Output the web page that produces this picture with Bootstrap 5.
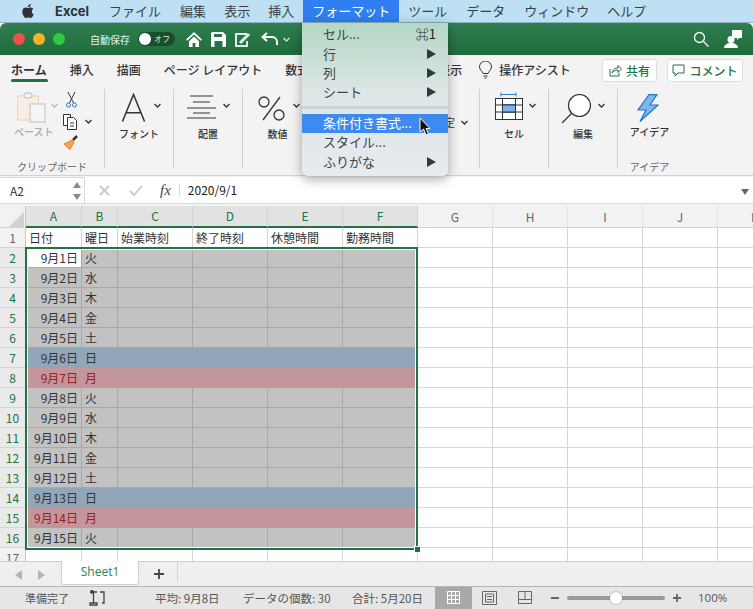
<!DOCTYPE html>
<html lang="ja"><head><meta charset="utf-8"><title>Excel</title>
<link rel="stylesheet" href="https://cdn.jsdelivr.net/npm/bootstrap@5.3.0/dist/css/bootstrap.min.css">
<style>
html,body{margin:0;height:609px;overflow:hidden;background:#fff}
body{font-family:"Noto Sans CJK JP","Liberation Sans",sans-serif;font-size:12px;color:#333;width:753px;position:relative}
.xl-menubar{height:23px;background:#bde0f3;border-bottom:1px solid #8fb0c4;font-size:13px;color:#3a3f44;padding-left:21px;line-height:22px}
.xl-menubar span{padding:0 9px;height:22px;white-space:nowrap}
.xl-menubar .xl-brand{font-family:"Inter","Liberation Sans",sans-serif;font-weight:700;color:#2d3338;padding:0 20px 0 20px;font-size:13px}
.xl-menubar .xl-active{background:#2f7ff0;color:#fff;margin-left:0}
.xl-title{height:32px;background:linear-gradient(#2f7f50,#1f6b3b);border-radius:6px 6px 0 0;color:#fff;padding:0 11px 0 13px}
.xl-dot{width:12px;height:12px;border-radius:50%;margin-right:8px;flex:none}
.xl-toggle{width:37px;height:14px;border-radius:7px;background:#174f2c;font-size:8px;position:relative;padding-left:16px;line-height:14px;margin-left:8px;color:#d9e7de}
.xl-toggle::before{content:"";position:absolute;left:1px;top:1px;width:12px;height:12px;border-radius:50%;background:#fff}
.xl-ribbon{height:121px;background:#f3f3f3;border-bottom:1px solid #d2d2d2}
.xl-tabs{height:34px;padding:0 0 4px 11px;gap:23px;font-size:12px;color:#333;font-weight:500;white-space:nowrap;position:relative}
.xl-tabon{font-weight:700;position:relative}
.xl-tabon::after{content:"";position:absolute;left:0;right:-1px;top:18px;height:3px;background:#217346;border-radius:2px}
.xl-rbtn{position:absolute;top:4px;height:23px;background:#fff;border:1px solid #dedede;border-radius:3px;color:#217346;font-weight:500;font-size:12px;gap:4px}
.xl-grp{height:79px;border-right:1px solid #cfcfcf;flex:none;position:relative}
.xl-big{height:34px;margin-top:4px}
.xl-lbl{font-size:10px;line-height:14px;text-align:center;color:#333;font-weight:500}
.xl-foot{position:absolute;left:0;right:0;bottom:-5px;font-size:10px;line-height:12px;text-align:center;color:#666}
.xl-fx{height:30px;background:#f3f3f3;padding:1px 0 2px}
.xl-name{width:85px;background:#fff;border:1px solid #d8d8d8;border-left:0;padding-left:10px;position:relative}
.xl-ftext{background:#fff;border:1px solid #dcdcdc;border-width:0 0 1px;flex:1;padding-left:8px;position:relative;color:#222}
.xl-sheet{height:355px;overflow:hidden;position:relative;background:#fff}
.xl-grid{border-collapse:separate;border-spacing:0;table-layout:fixed;width:793px;font-size:12px;color:#333}
.xl-grid td,.xl-grid th{box-sizing:border-box;height:20px;padding:0 3px;border-right:1px solid #d4d4d4;border-bottom:1px solid #d4d4d4;font-weight:400;white-space:nowrap;overflow:hidden;line-height:18px;background-clip:padding-box}
.xl-grid thead th{height:22px;background:#f2f2f2;color:#666;text-align:center;border-right-color:#e2e2e2;border-bottom-color:#d4d4d4;padding:0}
.xl-grid thead th.xl-on{background:#e2e2e2;color:#217346;border-bottom:2px solid #217346;border-right-color:#d2d2d2}
.xl-grid th.xl-rn{background:#f2f2f2;color:#666;text-align:center;padding:0;border-right-color:#c8c8c8}
.xl-grid th.xl-rn.xl-on{color:#217346;background:#eaeaea}
.xl-grid td.xl-g{background:#c2c2c2;border-color:#a8a8a8}
.xl-grid td.xl-b{background:#92a6b9;border-color:#92a6b9}
.xl-grid td.xl-r{background:#c2969b;border-color:#c2969b;color:#9b1c23}
.xl-grid td.xl-d{text-align:right;padding-right:3px}
.xl-grid td.xl-w{background:#fff;border-color:#a8a8a8}
.xl-sel{position:absolute;left:25px;top:41px;width:393px;height:303px;border:2px solid #217346;box-shadow:inset 0 0 0 1px #fff;pointer-events:none}
.xl-handle{position:absolute;left:387px;bottom:-5px;width:7px;height:7px;background:#217346;border:1px solid #fff}
.xl-corner{width:0;height:0;border-style:solid;border-width:0 0 15px 15px;border-color:transparent transparent #d0d0d0 transparent;margin:5px 0 0 9px}
.xl-tabbar{height:25px;background:#efefef;border-top:1px solid #cfcfcf;position:relative}
.xl-sheettab{position:absolute;left:61px;top:-1px;width:78px;height:24px;background:#fff;border:1px solid #d0d0d0;border-top:0;border-radius:0 0 3px 3px;color:#2f8457;text-align:center;line-height:22px;font-family:"Open Sans","Liberation Sans",sans-serif;font-size:12px}
.xl-status{height:23px;background:#e6e6e6;border-top:1px solid #b5b5b5;font-size:11.5px;color:#555;position:relative;white-space:nowrap}
.xl-status>span{position:absolute;top:0;line-height:22px}
.xl-view{position:absolute;left:435px;top:0;width:37px;height:22px;background:#a9a9a9}
.xl-track{position:absolute;left:567px;top:9px;width:98px;height:4px;border-radius:2px;background:#9a9a9a}
.xl-thumb{position:absolute;left:610px;top:5px;width:12px;height:12px;border-radius:50%;background:#fff;box-shadow:0 0 2px #888}
.xl-popup{position:absolute;left:302px;top:23px;width:146px;height:153px;background:linear-gradient(#b3d7c4,#dde6e6 45%,#e6ebee);border-radius:0 0 6px 6px;box-shadow:0 3px 12px rgba(0,0,0,.35);font-size:13px;color:#3f4448;padding-top:2px;z-index:5}
.xl-it{height:19px;line-height:17px;padding:0 12px 0 21px;white-space:nowrap}
.xl-it.xl-hi{background:#3f8af0;color:#fff}
.xl-sep{height:3px;background:#cdd6d5;margin:5px 0 5px}
.xl-tri{width:0;height:0;border-style:solid;border-width:5px 0 5px 9px;border-color:transparent transparent transparent #33393d}
.xl-key{color:#222}
svg{display:block;flex:none}
</style></head><body>

<div class="xl-menubar d-flex">
<svg width="14" height="16" viewBox="0 0 24 24" fill="#2d3338" class="align-self-center"><path d="M12.152 6.896c-.948 0-2.415-1.078-3.96-1.04-2.04.027-3.91 1.183-4.961 3.014-2.117 3.675-.546 9.103 1.519 12.09 1.013 1.454 2.208 3.09 3.792 3.039 1.52-.065 2.09-.987 3.935-.987 1.831 0 2.35.987 3.96.948 1.637-.026 2.676-1.48 3.676-2.948 1.156-1.688 1.636-3.325 1.662-3.415-.039-.013-3.182-1.221-3.22-4.857-.026-3.04 2.48-4.494 2.597-4.559-1.429-2.09-3.623-2.324-4.39-2.376-2-.156-3.675 1.09-4.61 1.09zM15.53 3.83c.843-1.012 1.4-2.427 1.245-3.83-1.207.052-2.662.805-3.532 1.818-.78.896-1.454 2.338-1.273 3.714 1.338.104 2.715-.688 3.559-1.701"/></svg>
<span class="xl-brand">Excel</span><span style="padding-left:0;padding-right:19px">ファイル</span><span style="padding-left:0;padding-right:18px">編集</span><span style="padding-left:0;padding-right:18px">表示</span><span style="padding-left:0;padding-right:9px">挿入</span><span class="xl-active">フォーマット</span><span>ツール</span><span style="padding-left:10px">データ</span><span style="padding-left:10px">ウィンドウ</span><span style="padding-left:9px">ヘルプ</span>
</div>

<div class="xl-title d-flex align-items-center">
<div class="xl-dot" style="background:#f0504a"></div><div class="xl-dot" style="background:#f6b32a"></div><div class="xl-dot" style="background:#2ecb40"></div>
<div style="margin-left:17px;font-size:10px;font-weight:500;color:#cfe3d6;white-space:nowrap">自動保存</div>
<div class="xl-toggle">オフ</div>
<svg style="margin-left:11px" width="16" height="15" viewBox="0 0 16 15" fill="#fff"><path d="M8 0 0 7.5l1.3 1.2L8 2.6l6.7 6.1L16 7.5zM3 9.2V15h3.6v-4h2.8v4H13V9.2L8 4.6z"/></svg>
<svg style="margin-left:9px" width="15" height="15" viewBox="0 0 15 15" fill="#fff"><path d="M0 1.5A1.500 1.500 0 0 1 1.500 0H12l3 3v10.500a1.500 1.500 0 0 1-1.500 1.500h-12A1.500 1.500 0 0 1 0 13.500zM3 2v3h8V2zM3.500 9v6h8V9z"/></svg>
<svg style="margin-left:8px" width="18" height="15" viewBox="0 0 18 15" fill="none" stroke="#dfeee4" stroke-width="2"><path d="M13 2H2v12h11V9"/><path d="M6 11 15 2" stroke-width="3"/></svg>
<svg style="margin-left:9px" width="18" height="14" viewBox="0 0 18 14" fill="none" stroke="#fff" stroke-width="2"><path d="M6 1 1.500 5 6 9M2 5h9a5 5 0 0 1 5 5v3"/></svg>
<svg style="margin-left:4px" width="7" height="5" viewBox="0 0 7 5" fill="none" stroke="#cfe3d6" stroke-width="1.300"><path d="M.500 1 3.500 4l3-3"/></svg>
<div class="ms-auto d-flex align-items-center">
<svg width="16" height="16" viewBox="0 0 16 16" fill="none" stroke="#fff" stroke-width="1.300"><circle cx="6.500" cy="6.500" r="5"/><path d="m10.500 10.500 5 5"/></svg>
<svg style="margin-left:15px" width="18" height="18" viewBox="0 0 18 18" fill="#fff"><path d="M8 0h10v8h-3l-2 2V8H8z"/><circle cx="7" cy="9.500" r="3.500"/><path d="M0 18c0-3 3-5 7-5s7 2 7 5z"/></svg>
</div>
</div>

<div class="xl-ribbon">
<div class="xl-tabs d-flex align-items-center">
<span class="xl-tabon">ホーム</span><span>挿入</span><span>描画</span><span>ページ レイアウト</span><span>数式</span><span>データ</span><span>校閲</span><span>表示</span>
<svg style="margin-left:-7px" width="15" height="18" viewBox="0 0 15 18" fill="none" stroke="#333" stroke-width="1"><path d="M5 12.500C4.500 10 1.500 9 1.500 6a6 6 0 0 1 12 0c0 3-3 4-3.500 6.500zM5.500 15h4M6.500 17h2"/></svg>
<span style="margin-left:-17px">操作アシスト</span>
<div class="xl-rbtn d-flex align-items-center justify-content-center" style="left:602px;width:55px"><svg width="13" height="13" viewBox="0 0 13 13" fill="none" stroke="#217346" stroke-width="1"><path d="M1 5v7h9V9M3 9c1-4 3-5 6-5V1.500L12.500 5 9 8.500V6C6.500 6 4.500 7 3 9z"/></svg>共有</div>
<div class="xl-rbtn d-flex align-items-center justify-content-center" style="left:667px;width:76px"><svg width="13" height="13" viewBox="0 0 13 13" fill="none" stroke="#217346" stroke-width="1"><path d="M1 1h11v8H6l-3 3V9H1z"/></svg>コメント</div>
</div>
<div class="d-flex">
 <div class="xl-grp d-flex" style="width:105px">
  <div style="width:62px;padding-left:14px">
   <div class="d-flex" style="margin-top:3px;height:37px">
   <svg style="margin-left:3px" width="29" height="31" viewBox="0 0 29 31" fill="none"><rect x=".5" y="4" width="21" height="24" fill="#f6eee2" stroke="#ecd5b5"/><rect x="7" y="1" width="8" height="5" rx="2" fill="#f3f3f3" stroke="#bbb"/><rect x="13" y="12" width="15" height="18" fill="#f5f5f5" stroke="#c0c0c0"/></svg>
   <svg style="margin:11px 0 0 5px" width="7" height="5" viewBox="0 0 7 5" fill="none" stroke="#bbb" stroke-width="1.300"><path d="M.500 1 3.500 4l3-3"/></svg>
   </div>
   <div class="xl-lbl" style="color:#aaa;text-align:left;margin-top:-13px;padding-top:4px;white-space:nowrap;line-height:24px">ペースト</div>
  </div>
  <div>
   <svg style="margin:3px 0 0 4px" width="11" height="16" viewBox="0 0 11 16" fill="none" stroke="#333"><path d="M2 0l5.500 11M9 0 3.500 11"/><circle cx="2.500" cy="13" r="2" stroke="#2c7cc8"/><circle cx="8.500" cy="13" r="2" stroke="#2c7cc8"/></svg>
   <div class="d-flex" style="margin-top:6px"><svg style="margin-left:1px" width="16" height="16" viewBox="0 0 16 16" fill="#fff" stroke="#333"><path d="M.500.500h7v11h-7z"/><path d="M4.500 3.500h6l3 3v9h-9z"/><path d="M7 9h4M7 12h4"/></svg><svg style="margin:5px 0 0 6px" width="7" height="5" viewBox="0 0 7 5" fill="none" stroke="#333" stroke-width="1.300"><path d="M.500 1 3.500 4l3-3"/></svg></div>
   <svg style="margin:5px 0 0 1px" width="15" height="15" viewBox="0 0 15 15"><path d="M9 5 1 9l6 5.500L11 7z" fill="#f5a35a" stroke="#e57c25"/><path d="m10 5 4-4" stroke="#333" stroke-width="2.500"/></svg>
  </div>
  <div class="xl-foot">クリップボード</div>
 </div>
 <div class="xl-grp" style="width:69px">
  <div class="xl-big d-flex justify-content-center">
  <svg style="margin-left:4px" width="25" height="30" viewBox="0 0 26 30" fill="none" stroke="#333" stroke-width="1.600"><path d="M1.500 29 13 1l11.500 28M5.500 20h15"/></svg>
  <svg style="margin:10px 0 0 8px" width="7" height="5" viewBox="0 0 7 5" fill="none" stroke="#333" stroke-width="1.300"><path d="M.500 1 3.500 4l3-3"/></svg>
  </div>
  <div class="xl-lbl">フォント</div>
 </div>
 <div class="xl-grp" style="width:69px">
  <div class="xl-big d-flex justify-content-center">
  <svg style="margin:2px 0 0 1px" width="29" height="24" viewBox="0 0 29 24" fill="none" stroke="#333"><path d="M3 1h23M6 7h17M0 13h29M6 18h17M0 23h29"/></svg>
  <svg style="margin:10px 0 0 7px" width="7" height="5" viewBox="0 0 7 5" fill="none" stroke="#333" stroke-width="1.300"><path d="M.500 1 3.500 4l3-3"/></svg>
  </div>
  <div class="xl-lbl">配置</div>
 </div>
 <div class="xl-grp d-flex" style="width:237px">
  <div style="width:69px">
   <div class="xl-big d-flex justify-content-center">
   <svg style="margin:3px 0 0 3px" width="27" height="25" viewBox="0 0 27 25" fill="none" stroke="#333" stroke-width="1.300"><circle cx="6" cy="6" r="5"/><circle cx="21" cy="19" r="5"/><path d="M22 1 5 24"/></svg>
   <svg style="margin:10px 0 0 8px" width="7" height="5" viewBox="0 0 7 5" fill="none" stroke="#333" stroke-width="1.300"><path d="M.500 1 3.500 4l3-3"/></svg>
   </div>
   <div class="xl-lbl">数値</div>
  </div>
  <div class="ms-auto d-flex align-items-start" style="padding:25px 11px 0 0;font-size:11px;white-space:nowrap;gap:6px">書式設定<svg style="margin-top:6px" width="7" height="5" viewBox="0 0 7 5" fill="none" stroke="#333" stroke-width="1.300"><path d="M.500 1 3.500 4l3-3"/></svg></div>
 </div>
 <div class="xl-grp" style="width:69px">
  <div class="xl-big d-flex justify-content-center">
  <svg style="margin:-1px 0 0 3px" width="28" height="28" viewBox="0 0 28 28" fill="#fff" stroke="#333"><path d="M6 2.500h15" stroke="#2c7cc8" fill="none"/><path d="M6 .5v4M21 .5v4" stroke="#2c7cc8" fill="none"/><rect x=".5" y="6.500" width="27" height="21"/><rect x="7.500" y="12.500" width="13" height="8" fill="#7fb3e6" stroke="#2c7cc8"/><path d="M.5 13h27M.5 20h27M7.500 6.500v21M20.500 6.500v21" fill="none"/></svg>
  <svg style="margin:10px 0 0 6px" width="7" height="5" viewBox="0 0 7 5" fill="none" stroke="#333" stroke-width="1.300"><path d="M.500 1 3.500 4l3-3"/></svg>
  </div>
  <div class="xl-lbl">セル</div>
 </div>
 <div class="xl-grp" style="width:69px">
  <div class="xl-big d-flex justify-content-center">
  <svg style="margin:1px 0 0 0" width="30" height="30" viewBox="0 0 30 30" fill="none" stroke="#333" stroke-width="1.200"><circle cx="18.500" cy="11.500" r="11" fill="#fff"/><path d="M10.500 19.500 1 29"/></svg>
  <svg style="margin:10px 0 0 7px" width="7" height="5" viewBox="0 0 7 5" fill="none" stroke="#333" stroke-width="1.300"><path d="M.500 1 3.500 4l3-3"/></svg>
  </div>
  <div class="xl-lbl">編集</div>
 </div>
 <div class="xl-grp border-0" style="width:63px">
  <div class="xl-big d-flex justify-content-center">
  <svg style="margin:1px 4px 0 0" width="22" height="28" viewBox="0 0 22 28"><path d="M12 .7 1 16h8L3 27.500 21 11h-8l7-10.300z" fill="#7fb8ee" stroke="#1f78c8" stroke-width="1.200"/></svg>
  </div>
  <div class="xl-lbl" style="margin-top:-2px">アイデア</div>
  <div class="xl-foot">アイデア</div>
 </div>
</div>
</div>

<div class="xl-fx d-flex">
 <div class="xl-name d-flex align-items-center" style="font-size:12px">A2
  <svg class="position-absolute" style="left:73px;top:4px" width="8" height="18" viewBox="0 0 8 18" fill="#888"><path d="M4 0l4 6H0zM4 18l4-6H0z"/></svg></div>
 <div class="xl-ftext d-flex align-items-center" style="padding-left:0">
  <svg style="margin-left:14px" width="11" height="11" viewBox="0 0 11 11" stroke="#c8c8c8" stroke-width="1.800"><path d="m1 1 9 9M10 1l-9 9"/></svg>
  <svg style="margin-left:19px" width="14" height="11" viewBox="0 0 14 11" fill="none" stroke="#c8c8c8" stroke-width="1.800"><path d="m1 6 4 4 8-9"/></svg>
  <span style="margin-left:17px;font-family:'Liberation Serif',serif;font-style:italic;font-size:15px;color:#444">fx</span>
  <div style="width:1px;height:14px;background:#ddd;margin:0 8px 0 8px"></div>
  <span style="font-size:12px">2020/9/1</span>
  <svg class="position-absolute" style="right:4px;top:12px" width="8" height="6" viewBox="0 0 8 6" fill="#666"><path d="M0 0h8L4 6z"/></svg>
 </div>
</div>

<div class="xl-sheet">
<table class="xl-grid">
<colgroup><col style="width:26px"><col style="width:56px"><col style="width:36px"><col style="width:75px"><col style="width:75px"><col style="width:75px"><col style="width:75px"><col style="width:75px"><col style="width:75px"><col style="width:75px"><col style="width:75px"><col style="width:75px"></colgroup>
<thead><tr><th class="xl-rn"><div class="xl-corner"></div></th><th class="xl-on">A</th><th class="xl-on">B</th><th class="xl-on">C</th><th class="xl-on">D</th><th class="xl-on">E</th><th class="xl-on">F</th><th>G</th><th>H</th><th>I</th><th>J</th><th>K</th></tr></thead>
<tbody>
<tr><th class="xl-rn">1</th><td>日付</td><td>曜日</td><td>始業時刻</td><td>終了時刻</td><td>休憩時間</td><td>勤務時間</td><td></td><td></td><td></td><td></td><td></td></tr>
<tr><th class="xl-rn xl-on">2</th><td class="xl-w xl-d">9月1日</td><td class="xl-g">火</td><td class="xl-g"></td><td class="xl-g"></td><td class="xl-g"></td><td class="xl-g"></td><td></td><td></td><td></td><td></td><td></td></tr>
<tr><th class="xl-rn xl-on">3</th><td class="xl-g xl-d">9月2日</td><td class="xl-g">水</td><td class="xl-g"></td><td class="xl-g"></td><td class="xl-g"></td><td class="xl-g"></td><td></td><td></td><td></td><td></td><td></td></tr>
<tr><th class="xl-rn xl-on">4</th><td class="xl-g xl-d">9月3日</td><td class="xl-g">木</td><td class="xl-g"></td><td class="xl-g"></td><td class="xl-g"></td><td class="xl-g"></td><td></td><td></td><td></td><td></td><td></td></tr>
<tr><th class="xl-rn xl-on">5</th><td class="xl-g xl-d">9月4日</td><td class="xl-g">金</td><td class="xl-g"></td><td class="xl-g"></td><td class="xl-g"></td><td class="xl-g"></td><td></td><td></td><td></td><td></td><td></td></tr>
<tr><th class="xl-rn xl-on">6</th><td class="xl-g xl-d">9月5日</td><td class="xl-g">土</td><td class="xl-g"></td><td class="xl-g"></td><td class="xl-g"></td><td class="xl-g"></td><td></td><td></td><td></td><td></td><td></td></tr>
<tr><th class="xl-rn xl-on">7</th><td class="xl-b xl-d">9月6日</td><td class="xl-b">日</td><td class="xl-b"></td><td class="xl-b"></td><td class="xl-b"></td><td class="xl-b"></td><td></td><td></td><td></td><td></td><td></td></tr>
<tr><th class="xl-rn xl-on">8</th><td class="xl-r xl-d">9月7日</td><td class="xl-r">月</td><td class="xl-r"></td><td class="xl-r"></td><td class="xl-r"></td><td class="xl-r"></td><td></td><td></td><td></td><td></td><td></td></tr>
<tr><th class="xl-rn xl-on">9</th><td class="xl-g xl-d">9月8日</td><td class="xl-g">火</td><td class="xl-g"></td><td class="xl-g"></td><td class="xl-g"></td><td class="xl-g"></td><td></td><td></td><td></td><td></td><td></td></tr>
<tr><th class="xl-rn xl-on">10</th><td class="xl-g xl-d">9月9日</td><td class="xl-g">水</td><td class="xl-g"></td><td class="xl-g"></td><td class="xl-g"></td><td class="xl-g"></td><td></td><td></td><td></td><td></td><td></td></tr>
<tr><th class="xl-rn xl-on">11</th><td class="xl-g xl-d">9月10日</td><td class="xl-g">木</td><td class="xl-g"></td><td class="xl-g"></td><td class="xl-g"></td><td class="xl-g"></td><td></td><td></td><td></td><td></td><td></td></tr>
<tr><th class="xl-rn xl-on">12</th><td class="xl-g xl-d">9月11日</td><td class="xl-g">金</td><td class="xl-g"></td><td class="xl-g"></td><td class="xl-g"></td><td class="xl-g"></td><td></td><td></td><td></td><td></td><td></td></tr>
<tr><th class="xl-rn xl-on">13</th><td class="xl-g xl-d">9月12日</td><td class="xl-g">土</td><td class="xl-g"></td><td class="xl-g"></td><td class="xl-g"></td><td class="xl-g"></td><td></td><td></td><td></td><td></td><td></td></tr>
<tr><th class="xl-rn xl-on">14</th><td class="xl-b xl-d">9月13日</td><td class="xl-b">日</td><td class="xl-b"></td><td class="xl-b"></td><td class="xl-b"></td><td class="xl-b"></td><td></td><td></td><td></td><td></td><td></td></tr>
<tr><th class="xl-rn xl-on">15</th><td class="xl-r xl-d">9月14日</td><td class="xl-r">月</td><td class="xl-r"></td><td class="xl-r"></td><td class="xl-r"></td><td class="xl-r"></td><td></td><td></td><td></td><td></td><td></td></tr>
<tr><th class="xl-rn xl-on">16</th><td class="xl-g xl-d">9月15日</td><td class="xl-g">火</td><td class="xl-g"></td><td class="xl-g"></td><td class="xl-g"></td><td class="xl-g"></td><td></td><td></td><td></td><td></td><td></td></tr>
<tr><th class="xl-rn">17</th><td></td><td></td><td></td><td></td><td></td><td></td><td></td><td></td><td></td><td></td><td></td></tr>
</tbody></table>
<div class="xl-sel"><div class="xl-handle"></div></div>
</div>

<div class="xl-tabbar">
 <svg class="position-absolute" style="left:15px;top:8px" width="7" height="10" viewBox="0 0 7 10" fill="#b5b5b5"><path d="M7 0v10L0 5z"/></svg>
 <svg class="position-absolute" style="left:38px;top:8px" width="7" height="10" viewBox="0 0 7 10" fill="#b5b5b5"><path d="M0 0v10l7-5z"/></svg>
 <div class="xl-sheettab">Sheet1</div>
 <svg class="position-absolute" style="left:154px;top:7px" width="10" height="10" viewBox="0 0 10 10" stroke="#444" stroke-width="1.800"><path d="M5 0v10M0 5h10"/></svg>
 <div class="position-absolute" style="left:177px;top:0;width:1px;height:20px;background:#d5d5d5"></div>
</div>

<div class="xl-status">
 <span style="left:25px;font-size:11px">準備完了</span>
 <svg class="position-absolute" style="left:89px;top:3px" width="16" height="16" viewBox="0 0 16 16" fill="none" stroke="#444" stroke-width="1.300"><path d="M1 2h7M4.500 2v11H1v2h7v-2H4.500M11 2h4v11h-2"/><circle cx="3" cy="1.800" r="1.300" fill="#444"/></svg>
 <span style="left:155px">平均: 9月8日</span>
 <span style="left:243px">データの個数: 30</span>
 <span style="left:352px">合計: 5月20日</span>
 <div class="xl-view"></div>
 <svg class="position-absolute" style="left:447px;top:4px" width="13" height="13" viewBox="0 0 13 13" fill="none" stroke="#fff"><path d="M.5.5h12v12H.5zM4.500.5v12M8.500.5v12M.5 4.500h12M.5 8.500h12"/></svg>
 <svg class="position-absolute" style="left:482px;top:4px" width="15" height="14" viewBox="0 0 15 14" fill="none" stroke="#666"><path d="M.5.5h14v13H.5zM3.500 3h8v8h-8zM5 5.500h5M5 8.500h5"/></svg>
 <svg class="position-absolute" style="left:518px;top:4px" width="14" height="13" viewBox="0 0 14 13" fill="none" stroke="#666"><path d="M.5.5h13v12H.5zM.5 8.500h13M7 .5v8"/></svg>
 <svg class="position-absolute" style="left:551px;top:10px" width="8" height="2" viewBox="0 0 8 2" fill="#666"><path d="M0 0h8v2H0z"/></svg>
 <div class="xl-track"></div><div class="xl-thumb"></div>
 <svg class="position-absolute" style="left:673px;top:7px" width="8" height="8" viewBox="0 0 8 8" stroke="#666" stroke-width="1.800"><path d="M4 0v8M0 4h8"/></svg>
 <span style="left:698px;font-family:'Open Sans','Liberation Sans',sans-serif">100%</span>
</div>

<div class="xl-popup">
 <div class="xl-it d-flex justify-content-between"><span>セル...</span><span class="xl-key">⌘1</span></div>
 <div class="xl-it d-flex justify-content-between align-items-center"><span>行</span><div class="xl-tri"></div></div>
 <div class="xl-it d-flex justify-content-between align-items-center"><span>列</span><div class="xl-tri"></div></div>
 <div class="xl-it d-flex justify-content-between align-items-center"><span>シート</span><div class="xl-tri"></div></div>
 <div class="xl-sep"></div>
 <div class="xl-it xl-hi">条件付き書式...</div>
 <div class="xl-it">スタイル...</div>
 <div class="xl-it d-flex justify-content-between align-items-center"><span>ふりがな</span><div class="xl-tri"></div></div>
</div>
<svg class="position-absolute" style="left:419px;top:117px;z-index:6" width="12" height="19" viewBox="0 0 12 19"><path d="M1 1v14l3.500-3 2.500 6 2.500-1-2.500-5.500H11z" fill="#111" stroke="#fff"/></svg>
</body></html>
